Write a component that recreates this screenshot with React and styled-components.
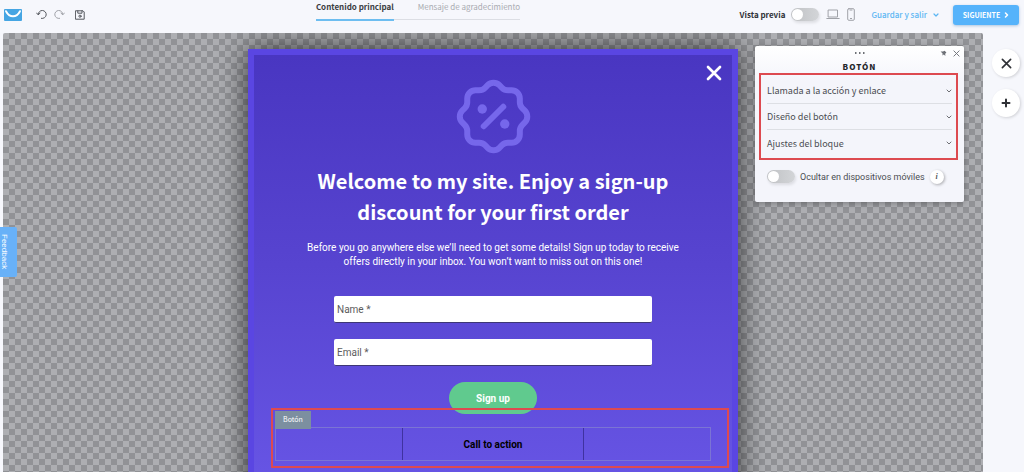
import React, {useState} from 'react';
import styled, {createGlobalStyle, css} from 'styled-components';

const GlobalStyle = createGlobalStyle`
  * {
    box-sizing: border-box;
  }
  body {
    margin: 0;
    background: #f6f7fc;
    color: #2f3136;
    font-family: 'Noto Sans CJK SC', 'Noto Sans', sans-serif;
    font-size: 10px;
  }
  button {
    padding: 0;
    border: 0;
    background: none;
    color: inherit;
    font: inherit;
    cursor: pointer;
  }
  svg {
    display: block;
    flex: none;
  }
`;

const Page = styled.div`
  display: flex;
  flex-direction: column;
  height: 100vh;
  overflow: hidden;
`;

const Header = styled.header`
  display: grid;
  grid-template-columns: 31% 1fr auto;
  flex: none;
  height: 33px;
  padding-right: 5px;
`;

const Tools = styled.div`
  display: flex;
  align-items: center;
  gap: 7px;
  height: 29px;
  padding-left: 4px;
  > svg {
    margin-right: 7px;
  }
`;

const ToolButton = styled.button`
  color: ${({$muted}) => ($muted ? '#a0a2a8' : '#55585e')};
  margin-left: ${({$spaced}) => ($spaced ? '3px' : '0')};
`;

const Tabs = styled.nav`
  display: flex;
  align-self: start;
  justify-self: start;
`;

const Tab = styled.a`
  height: ${({$active}) => ($active ? '21px' : '20px')};
  padding-left: ${({$active}) => ($active ? '0' : '24px')};
  border-bottom: ${({$active}) => ($active ? '2px solid #6dbdf0' : '1px solid #dcdee4')};
  color: ${({$active}) => ($active ? '#3a3c41' : '#a9abb1')};
  font-size: 8px;
  font-weight: ${({$active}) => ($active ? 700 : 400)};
  line-height: 13px;
  text-decoration: none;
  white-space: nowrap;
`;

const Actions = styled.div`
  display: flex;
  align-items: center;
  gap: 7px;
  height: 29px;
`;

const PreviewLabel = styled.label`
  display: flex;
  align-items: center;
  gap: 6px;
  font-size: 8px;
  font-weight: 700;
`;

const Switch = styled.input.attrs({type: 'checkbox', role: 'switch'})`
  flex: none;
  appearance: none;
  display: flex;
  align-items: center;
  width: 28px;
  height: 13px;
  margin: 0;
  padding: 0 1px;
  border-radius: 7px;
  background: linear-gradient(90deg, #bfc1c4, #d3d5d8);
  box-shadow: 1px 2px 3px rgba(0, 0, 0, 0.1);
  cursor: pointer;
  &::before {
    content: '';
    width: 11px;
    height: 11px;
    border-radius: 50%;
    background: #fff;
  }
  &:checked {
    justify-content: flex-end;
    background: #55b5fa;
  }
`;

const SaveButton = styled.button`
  display: flex;
  align-items: center;
  gap: 6px;
  margin: 0 7px 0 9px;
  color: #5bb6f3;
  font-size: 8px;
  font-weight: 500;
`;

const NextButton = styled.button`
  display: flex;
  align-items: center;
  justify-content: center;
  gap: 4px;
  width: 66px;
  height: 20px;
  border-radius: 3px;
  background: #55b3fb;
  box-shadow: 0 1px 3px rgba(60, 120, 180, 0.4);
  color: #fff;
  font-size: 7px;
  font-weight: 700;
`;

const Workspace = styled.main`
  display: flex;
  flex: 1;
  min-height: 0;
  padding-left: 3px;
`;

const Canvas = styled.section`
  position: relative;
  display: flex;
  flex: 1;
  align-items: flex-start;
  justify-content: center;
  padding-top: 16px;
  border-radius: 2px 2px 0 0;
  overflow: hidden;
  background: repeating-conic-gradient(#919296 0 25%, #adaeb2 0 50%) 0 0 / 12px 12px;
`;

const Popup = styled.form`
  position: relative;
  display: flex;
  flex-direction: column;
  align-items: center;
  width: 100%;
  max-width: 490px;
  padding: 24px 21px 60px;
  border: 6px solid #5a46e2;
  background: linear-gradient(#4936c1, #5744d0 45%, #6856e6 95%);
  background-clip: padding-box;
  box-shadow: 0 0 28px rgba(0, 0, 0, 0.7);
  font-family: Roboto, sans-serif;
`;

const PopupClose = styled.button`
  position: absolute;
  top: 10px;
  right: 10px;
  color: #fff;
`;

const Title = styled.h1`
  margin: 11px 0 14px;
  color: #fff;
  font-family: 'Noto Sans CJK SC', 'Noto Sans', sans-serif;
  font-size: 20px;
  font-weight: 700;
  line-height: 31px;
  text-align: center;
`;

const Lead = styled.p`
  margin: 0 0 27px;
  color: #fff;
  font-size: 10px;
  line-height: 14px;
  text-align: center;
`;

const Field = styled.input`
  width: 318px;
  height: 27px;
  margin-bottom: 16px;
  padding: 0 3px;
  border: 0;
  border-bottom: 1px solid #3d3675;
  border-radius: 2px;
  background: #fff;
  font: 10px Roboto, sans-serif;
  &::placeholder {
    color: #5c5c5c;
    opacity: 1;
  }
`;

const SignUp = styled.button`
  width: 88px;
  height: 32px;
  margin-bottom: 13px;
  border-radius: 16px;
  background: #60ca8e;
  color: #fff;
  font-size: 10px;
  font-weight: 700;
`;

const Highlight = styled.div`
  position: absolute;
  border: 2px solid #dd4a50;
  pointer-events: none;
`;

const Block = styled.div`
  position: relative;
  display: grid;
  grid-template-columns: 126px 1fr 126px;
  align-self: stretch;
  height: 34px;
  border: 1px solid #7b74d4;
  ${Highlight} {
    inset: -20px -19px -8px -5px;
  }
`;

const BlockLabel = styled.span`
  position: absolute;
  top: -17px;
  left: -1px;
  width: 36px;
  height: 18px;
  background: #7c8fa0;
  color: #fff;
  font: 7px/17px 'Noto Sans CJK SC', sans-serif;
  text-align: center;
`;

const CallToAction = styled.button`
  grid-column: 2;
  border-left: 1px solid #3f32a0;
  border-right: 1px solid #3f32a0;
  color: #000;
  font-size: 10px;
  font-weight: 700;
`;

const Panel = styled.aside`
  position: absolute;
  top: 13px;
  right: 19px;
  width: 209px;
  padding: 0 12px 18px;
  border-radius: 2px;
  background: linear-gradient(#fff, #f4f5fb 35px);
  box-shadow: 0 1px 6px rgba(0, 0, 0, 0.3);
`;

const PanelBar = styled.div`
  display: grid;
  grid-template-columns: 1fr auto 1fr;
  align-items: center;
  height: 14px;
  margin-right: -8px;
  margin-left: -8px;
  color: #6d7076;
`;

const PanelTools = styled.div`
  display: flex;
  justify-content: flex-end;
  gap: 6px;
`;

const PanelTitle = styled.h2`
  margin: 0;
  color: #24262a;
  font-size: 8px;
  font-weight: 900;
  letter-spacing: 1px;
  line-height: 14px;
  text-align: center;
`;

const Sections = styled.div`
  position: relative;
  padding: 4px 0 3px;
  ${Highlight} {
    inset: -1px -6px -1px -8px;
  }
`;

const Section = styled.button`
  display: flex;
  align-items: center;
  justify-content: space-between;
  width: 100%;
  height: 26px;
  border-bottom: 1px solid #dddfe4;
  color: #4b4d52;
  font-size: 9px;
  &:last-of-type {
    border-bottom: 0;
  }
`;

const HideOnMobile = styled.div`
  display: flex;
  align-items: center;
  gap: 5px;
  height: 15px;
  margin-top: 10px;
  label {
    color: #4b4d52;
    font-family: Roboto, sans-serif;
    font-size: 9px;
    white-space: nowrap;
  }
`;

const round = css`
  display: grid;
  place-items: center;
  flex: none;
  border-radius: 50%;
  background: #fff;
`;

const InfoButton = styled.button`
  ${round}
  width: 14px;
  height: 14px;
  box-shadow: 1px 1px 3px rgba(0, 0, 0, 0.3);
  color: #55585e;
  font: italic 700 8px 'Liberation Serif', serif;
`;

const Rail = styled.div`
  display: flex;
  flex-direction: column;
  align-items: center;
  gap: 12px;
  width: 41px;
  padding: 16px 0 0 5px;
`;

const RailButton = styled.button`
  ${round}
  width: 28px;
  height: 28px;
  box-shadow: 1px 1px 3px rgba(0, 0, 0, 0.15);
  color: #2f3136;
`;

const Feedback = styled.button`
  position: fixed;
  top: 227px;
  left: 0;
  display: flex;
  align-items: center;
  width: 17px;
  height: 50px;
  border-radius: 0 2px 2px 0;
  background: #68b1f8;
  span {
    color: #fff;
    font: 8px/9px 'Liberation Sans', sans-serif;
    writing-mode: vertical-rl;
  }
`;

const Stroke = ({w, h = w, box = `0 0 ${w} ${h}`, width = 1, children}) => (
  <svg
    width={w}
    height={h}
    viewBox={box}
    fill="none"
    stroke="currentColor"
    strokeWidth={width}
    strokeLinecap="round"
    strokeLinejoin="round"
    aria-hidden="true"
  >
    {children}
  </svg>
);

const Cross = ({size, width}) => (
  <Stroke w={size} box="0 0 12 12" width={width}>
    <path d="M1.5 1.5l9 9M10.5 1.5l-9 9" />
  </Stroke>
);

const Chevron = ({width}) => (
  <Stroke w={6} width={width}>
    <path d="M1 2l2 2 2-2" />
  </Stroke>
);

const Logo = () => (
  <svg width="18" height="12" viewBox="0 0 18 12" aria-hidden="true">
    <rect width="18" height="12" rx="1" fill="#45a5e3" />
    <path d="M2 2.2C5.5 9 12.5 9 16 2.2" fill="none" stroke="#fff" strokeWidth="1.9" strokeLinecap="round" />
  </svg>
);

const Undo = () => (
  <Stroke w={11}>
    <path d="M2.2 5.5A4 4 0 1 1 5.4 9.4M.6 4l1.6 1.8L4 4.2" />
  </Stroke>
);

const Redo = () => (
  <Stroke w={11}>
    <path d="M8.8 5.5A4 4 0 1 0 5.6 9.4M10.4 4L8.8 5.8 7 4.2" />
  </Stroke>
);

const Save = () => (
  <Stroke w={10}>
    <path d="M.8.8h7.2l1.2 1.2v7.2H.8zM2.8.8v2.4h4.2V.8" />
    <circle cx="5" cy="6.2" r="1.1" />
  </Stroke>
);

const DiscountBadge = () => (
  <svg width="75" height="75" viewBox="2 2 20 20" fill="none" stroke="#7667eb" strokeWidth="1.6" strokeLinecap="round" strokeLinejoin="round" aria-hidden="true">
    <path d="M5 7.2a2.2 2.2 0 0 1 2.2 -2.2h1a2.2 2.2 0 0 0 1.55 -.64l.7 -.7a2.2 2.2 0 0 1 3.12 0l.7 .7c.412 .41 .97 .64 1.55 .64h1a2.2 2.2 0 0 1 2.2 2.2v1c0 .58 .23 1.138 .64 1.55l.7 .7a2.2 2.2 0 0 1 0 3.12l-.7 .7a2.2 2.2 0 0 0 -.64 1.55v1a2.2 2.2 0 0 1 -2.2 2.2h-1a2.2 2.2 0 0 0 -1.55 .64l-.7 .7a2.2 2.2 0 0 1 -3.12 0l-.7 -.7a2.2 2.2 0 0 0 -1.55 -.64h-1a2.2 2.2 0 0 1 -2.2 -2.2v-1a2.2 2.2 0 0 0 -.64 -1.55l-.7 -.7a2.2 2.2 0 0 1 0 -3.12l.7 -.7a2.2 2.2 0 0 0 .64 -1.55z" />
    <path d="M9.4 14.6l5.2-5.2" />
    <circle cx="9" cy="10" r="1.25" fill="#7667eb" stroke="none" />
    <circle cx="15" cy="14" r="1.25" fill="#7667eb" stroke="none" />
  </svg>
);

const TopBar = () => {
  const [preview, setPreview] = useState(false);
  return (
    <Header>
      <Tools>
        <Logo />
        <ToolButton aria-label="Deshacer">
          <Undo />
        </ToolButton>
        <ToolButton $muted aria-label="Rehacer">
          <Redo />
        </ToolButton>
        <ToolButton $spaced aria-label="Guardar">
          <Save />
        </ToolButton>
      </Tools>
      <Tabs>
        <Tab href="#contenido" $active>
          Contenido principal
        </Tab>
        <Tab href="#mensaje">Mensaje de agradecimiento</Tab>
      </Tabs>
      <Actions>
        <PreviewLabel>
          Vista previa
          <Switch checked={preview} onChange={() => setPreview(!preview)} />
        </PreviewLabel>
        <ToolButton $muted aria-label="Escritorio">
          <Stroke w={14} h={11}>
            <path d="M2.5 1h9v7h-9zM.8 9.5h12.4" />
          </Stroke>
        </ToolButton>
        <ToolButton $muted aria-label="Móvil">
          <Stroke w={8} h={13}>
            <rect x="0.7" y="0.7" width="6.6" height="11.6" rx="1.2" />
            <path d="M3.4 10.5h1.2M3 2h2" />
          </Stroke>
        </ToolButton>
        <SaveButton>
          Guardar y salir
          <Chevron width={1.2} />
        </SaveButton>
        <NextButton>
          SIGUIENTE
          <Stroke w={5} h={6} width={1.5}>
            <path d="M1.5 1l2 2-2 2" />
          </Stroke>
        </NextButton>
      </Actions>
    </Header>
  );
};

const SignUpPopup = () => (
  <Popup onSubmit={event => event.preventDefault()}>
    <PopupClose type="button" aria-label="Close">
      <Cross size={16} width={2} />
    </PopupClose>
    <DiscountBadge />
    <Title>
      Welcome to my site. Enjoy a sign-up
      <br />
      discount for your first order
    </Title>
    <Lead>
      Before you go anywhere else we’ll need to get some details! Sign up today to receive
      <br />
      offers directly in your inbox. You won’t want to miss out on this one!
    </Lead>
    <Field type="text" placeholder="Name *" aria-label="Name" />
    <Field type="email" placeholder="Email *" aria-label="Email" />
    <SignUp type="submit">Sign up</SignUp>
    <Block>
      <BlockLabel>Botón</BlockLabel>
      <CallToAction type="button">Call to action</CallToAction>
      <Highlight />
    </Block>
  </Popup>
);

const sections = ['Llamada a la acción y enlace', 'Diseño del botón', 'Ajustes del bloque'];

const ButtonPanel = () => (
  <Panel>
    <PanelBar>
      <span />
      <svg width="10" height="2" viewBox="0 0 10 2" fill="currentColor" aria-hidden="true">
        <path d="M0 0h1.5v2H0zM4 0h1.5v2H4zM8 0h1.5v2H8z" />
      </svg>
      <PanelTools>
        <button aria-label="Fijar">
          <svg width="7" height="7" viewBox="0 0 7 7" fill="currentColor" aria-hidden="true">
            <path d="M.6 1.4L3 1.6 4.6.8 6.4 2.6 5.2 3.8 5.4 6 3.8 4.6 2.4 5.4 2.6 3.4z" />
          </svg>
        </button>
        <button aria-label="Cerrar">
          <Cross size={7} width={1.6} />
        </button>
      </PanelTools>
    </PanelBar>
    <PanelTitle>BOTÓN</PanelTitle>
    <Sections>
      {sections.map(section => (
        <Section key={section}>
          {section}
          <Chevron width={0.8} />
        </Section>
      ))}
      <Highlight />
    </Sections>
    <HideOnMobile>
      <Switch id="hide-mobile" />
      <label htmlFor="hide-mobile">Ocultar en dispositivos móviles</label>
      <InfoButton aria-label="Información">i</InfoButton>
    </HideOnMobile>
  </Panel>
);

const App = () => (
  <Page>
    <GlobalStyle />
    <TopBar />
    <Workspace>
      <Canvas>
        <SignUpPopup />
        <ButtonPanel />
      </Canvas>
      <Rail>
        <RailButton aria-label="Cerrar">
          <Cross size={11} width={1.8} />
        </RailButton>
        <RailButton aria-label="Añadir">
          <Stroke w={10} width={2}>
            <path d="M5 1.5v7M1.5 5h7" />
          </Stroke>
        </RailButton>
      </Rail>
    </Workspace>
    <Feedback>
      <span>Feedback</span>
    </Feedback>
  </Page>
);

export default App;
